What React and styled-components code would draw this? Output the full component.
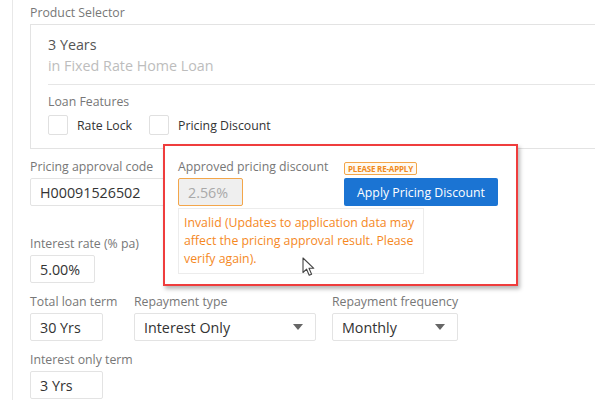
import React from 'react';
import styled, { createGlobalStyle } from 'styled-components';

const GlobalStyle = createGlobalStyle`
  html, body {
    margin: 0;
    padding: 0;
    background: #fff;
    overflow: hidden;
  }
  body {
    font-family: "Open Sans", "Liberation Sans", sans-serif;
    color: #333;
  }
`;

const App = () => {
  return (
    <>
      <GlobalStyle />
      <Page>
        <Label>Product Selector</Label>
        <ProductBox>
          <ProductName>3 Years</ProductName>
          <ProductFamily>in Fixed Rate Home Loan</ProductFamily>
          <Divider />
          <SubLabel>Loan Features</SubLabel>
          <FeatureRow>
            <Feature label="Rate Lock" />
            <Feature label="Pricing Discount" />
          </FeatureRow>
        </ProductBox>

        <PricingRow>
          <Column>
            <Field>
              <Label>Pricing approval code</Label>
              <Input width={150}>H00091526502</Input>
            </Field>
            <Field>
              <Label>Interest rate (% pa)</Label>
              <Input width={65}>5.00%</Input>
            </Field>
          </Column>

          <DiscountGroup>
            <Label>Approved pricing discount</Label>
            <BadgeCell>
              <Badge>PLEASE RE-APPLY</Badge>
            </BadgeCell>
            <Input width={65} invalid>2.56%</Input>
            <ApplyButton>Apply Pricing Discount</ApplyButton>
            <ErrorBox>
              Invalid (Updates to application data may affect the pricing
              approval result. Please verify again).
              <Pointer />
            </ErrorBox>
          </DiscountGroup>
        </PricingRow>

        <FieldRow>
          <Field width={104}>
            <Label>Total loan term</Label>
            <Input width={73}>30 Yrs</Input>
          </Field>
          <Field width={198}>
            <Label>Repayment type</Label>
            <Select width={182} value="Interest Only" />
          </Field>
          <Field>
            <Label>Repayment frequency</Label>
            <Select width={126} value="Monthly" />
          </Field>
        </FieldRow>

        <FieldRow>
          <Field>
            <Label>Interest only term</Label>
            <Input width={73}>3 Yrs</Input>
          </Field>
        </FieldRow>
      </Page>
    </>
  );
};

const Feature = ({ label }) => (
  <FeatureItem>
    <Checkbox />
    <FeatureText>{label}</FeatureText>
  </FeatureItem>
);

const Select = ({ width, value }) => (
  <SelectBox width={width}>
    <span>{value}</span>
    <Caret />
  </SelectBox>
);

// mouse pointer resting over the message
const Pointer = () => (
  <PointerIcon width="14" height="20" viewBox="0 0 14 20">
    <path
      d="M1 1 L1 15.5 L4.6 12.2 L7.2 18.3 L9.6 17.3 L7 11.3 L11.8 11.3 Z"
      fill="#fff"
      stroke="#444"
      strokeWidth="1.1"
      strokeLinejoin="round"
    />
  </PointerIcon>
);

const Page = styled.div`
  margin-left: 12px;
  border-left: 1px solid #e8e8e8;
  padding: 4px 0 2px 17px;
  height: 394px;
`;

const Label = styled.div`
  font-size: 12.3px;
  line-height: 18px;
  color: #777;
  margin-bottom: 2px;
  white-space: nowrap;
`;

const ProductBox = styled.div`
  border: 1px solid #e3e3e3;
  margin-right: -1px;
  padding: 9px 0 13px 17px;
`;

const ProductName = styled.div`
  font-size: 14.3px;
  line-height: 21px;
  color: #555;
`;

const ProductFamily = styled.div`
  font-size: 14.3px;
  line-height: 21px;
  color: #bdbdbd;
`;

const Divider = styled.div`
  border-top: 1px solid #e6e6e6;
  margin: 8px 0 8px;
`;

const SubLabel = styled.div`
  font-size: 12.3px;
  line-height: 18px;
  color: #777;
  margin-bottom: 4px;
`;

const FeatureRow = styled.div`
  display: flex;
  gap: 17px;
`;

const FeatureItem = styled.label`
  display: flex;
  align-items: center;
  gap: 9px;
`;

const Checkbox = styled.span`
  width: 18px;
  height: 18px;
  border: 1px solid #e0e0e0;
  border-radius: 2px;
  background: #fff;
`;

const FeatureText = styled.span`
  font-size: 12.3px;
  color: #333;
`;

const PricingRow = styled.div`
  display: flex;
  margin-top: 9px;
`;

const Column = styled.div`
  display: flex;
  flex-direction: column;
  gap: 29px;
  width: 148px;
`;

const Field = styled.div`
  display: flex;
  flex-direction: column;
  width: ${p => (p.width ? `${p.width}px` : 'auto')};
`;

const Input = styled.div`
  box-sizing: border-box;
  width: ${p => p.width}px;
  height: 28px;
  display: flex;
  align-items: center;
  padding: 0 9px;
  font-size: 14.3px;
  border: 1px solid ${p => (p.invalid ? '#f3a64a' : '#e3e3e3')};
  border-radius: 2px;
  background: ${p => (p.invalid ? '#efefef' : '#fff')};
  color: ${p => (p.invalid ? '#a9a9a9' : '#333')};
  white-space: nowrap;
`;

const DiscountGroup = styled.div`
  position: relative;
  z-index: 1;
  display: grid;
  grid-template-columns: 166px auto;
  align-items: end;
  align-self: flex-start;

  &::before {
    content: '';
    position: absolute;
    top: -14px;
    left: -15px;
    right: -20px;
    bottom: -12px;
    z-index: -1;
    background: #fff;
    border: 2px solid #ef3d3d;
    box-shadow: 2px 3px 4px rgba(0, 0, 0, 0.28);
  }
`;

const BadgeCell = styled.div`
  display: flex;
  padding-bottom: 3px;
`;

const Badge = styled.span`
  box-sizing: border-box;
  height: 13px;
  padding: 0 3px;
  display: flex;
  align-items: center;
  font-size: 8px;
  font-weight: 700;
  letter-spacing: -0.2px;
  color: #f08a1c;
  background: #fffaf0;
  border: 1px solid #f3a64a;
  border-radius: 2px;
`;

const ApplyButton = styled.button`
  box-sizing: border-box;
  height: 28px;
  width: 154px;
  border: none;
  border-radius: 2px;
  background: #1b74d3;
  color: #fff;
  font-family: inherit;
  font-size: 12.3px;
  padding: 0;
`;

const ErrorBox = styled.div`
  position: relative;
  grid-column: 1 / -1;
  box-sizing: border-box;
  width: 246px;
  margin-top: 2px;
  padding: 5px 5px;
  border: 1px solid #ececec;
  font-size: 12.3px;
  line-height: 18px;
  color: #f5891f;
`;

const PointerIcon = styled.svg`
  position: absolute;
  left: 123px;
  top: 48px;
`;

const FieldRow = styled.div`
  display: flex;
  margin-top: 10px;
`;

const SelectBox = styled.div`
  box-sizing: border-box;
  width: ${p => p.width}px;
  height: 28px;
  display: flex;
  align-items: center;
  justify-content: space-between;
  padding: 0 12px 0 9px;
  font-size: 14.3px;
  color: #333;
  border: 1px solid #e3e3e3;
  border-radius: 2px;
  background: #fff;
`;

const Caret = styled.span`
  width: 0;
  height: 0;
  border-left: 5.5px solid transparent;
  border-right: 5.5px solid transparent;
  border-top: 6px solid #666;
`;

export default App;
